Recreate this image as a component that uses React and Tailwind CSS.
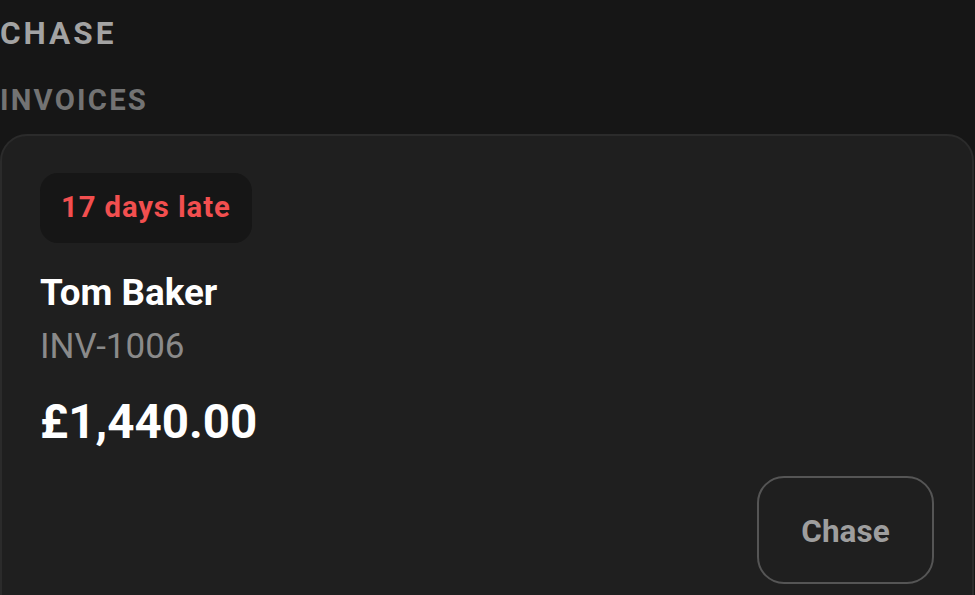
import React from "react";

const invoices = [
  { id: "INV-1006", name: "Tom Baker", amount: "£1,440.00", late: "17 days late" },
];

export default function App() {
  return (
    <div
      className="min-h-screen w-full bg-[#161616] overflow-hidden"
      style={{ fontFamily: "Roboto, 'Liberation Sans', sans-serif" }}
    >
      <div className="pt-[11px]">
        <h1 className="text-[31.5px] leading-[45px] font-bold tracking-[0.095em] text-[#a3a3a3]">
          CHASE
        </h1>
        <h2 className="mt-[24px] text-[29.25px] leading-[40px] font-bold tracking-[0.075em] text-[#737373]">
          INVOICES
        </h2>
      </div>

      <div className="mt-[14px] w-[974px]">
        {invoices.map((inv) => (
          <div
            key={inv.id}
            className="rounded-[27px] border-2 border-[#2b2b2b] bg-[#1f1f1f] pt-[37px] px-[38px] pb-[40px]"
          >
            <div className="inline-flex h-[70px] items-center rounded-[18px] bg-[#161616] px-[21px]">
              <span className="text-[29.25px] font-bold tracking-[0.9px] text-[#f24f4f]">
                {inv.late}
              </span>
            </div>
            <div className="mt-[26px] text-[36.8px] leading-[48px] font-bold text-white">
              {inv.name}
            </div>
            <div className="mt-[7px] text-[35px] leading-[45px] text-[#8a8a8a]">
              {inv.id}
            </div>
            <div className="mt-[23px] text-[47.5px] leading-[60px] font-bold text-white">
              {inv.amount}
            </div>
            <div className="mt-[24px] flex justify-end">
              <button className="h-[108px] w-[177px] rounded-[27px] border-2 border-[#555555] pt-[4px] text-[31.5px] font-bold text-[#9e9e9e]">
                Chase
              </button>
            </div>
          </div>
        ))}
      </div>
    </div>
  );
}
